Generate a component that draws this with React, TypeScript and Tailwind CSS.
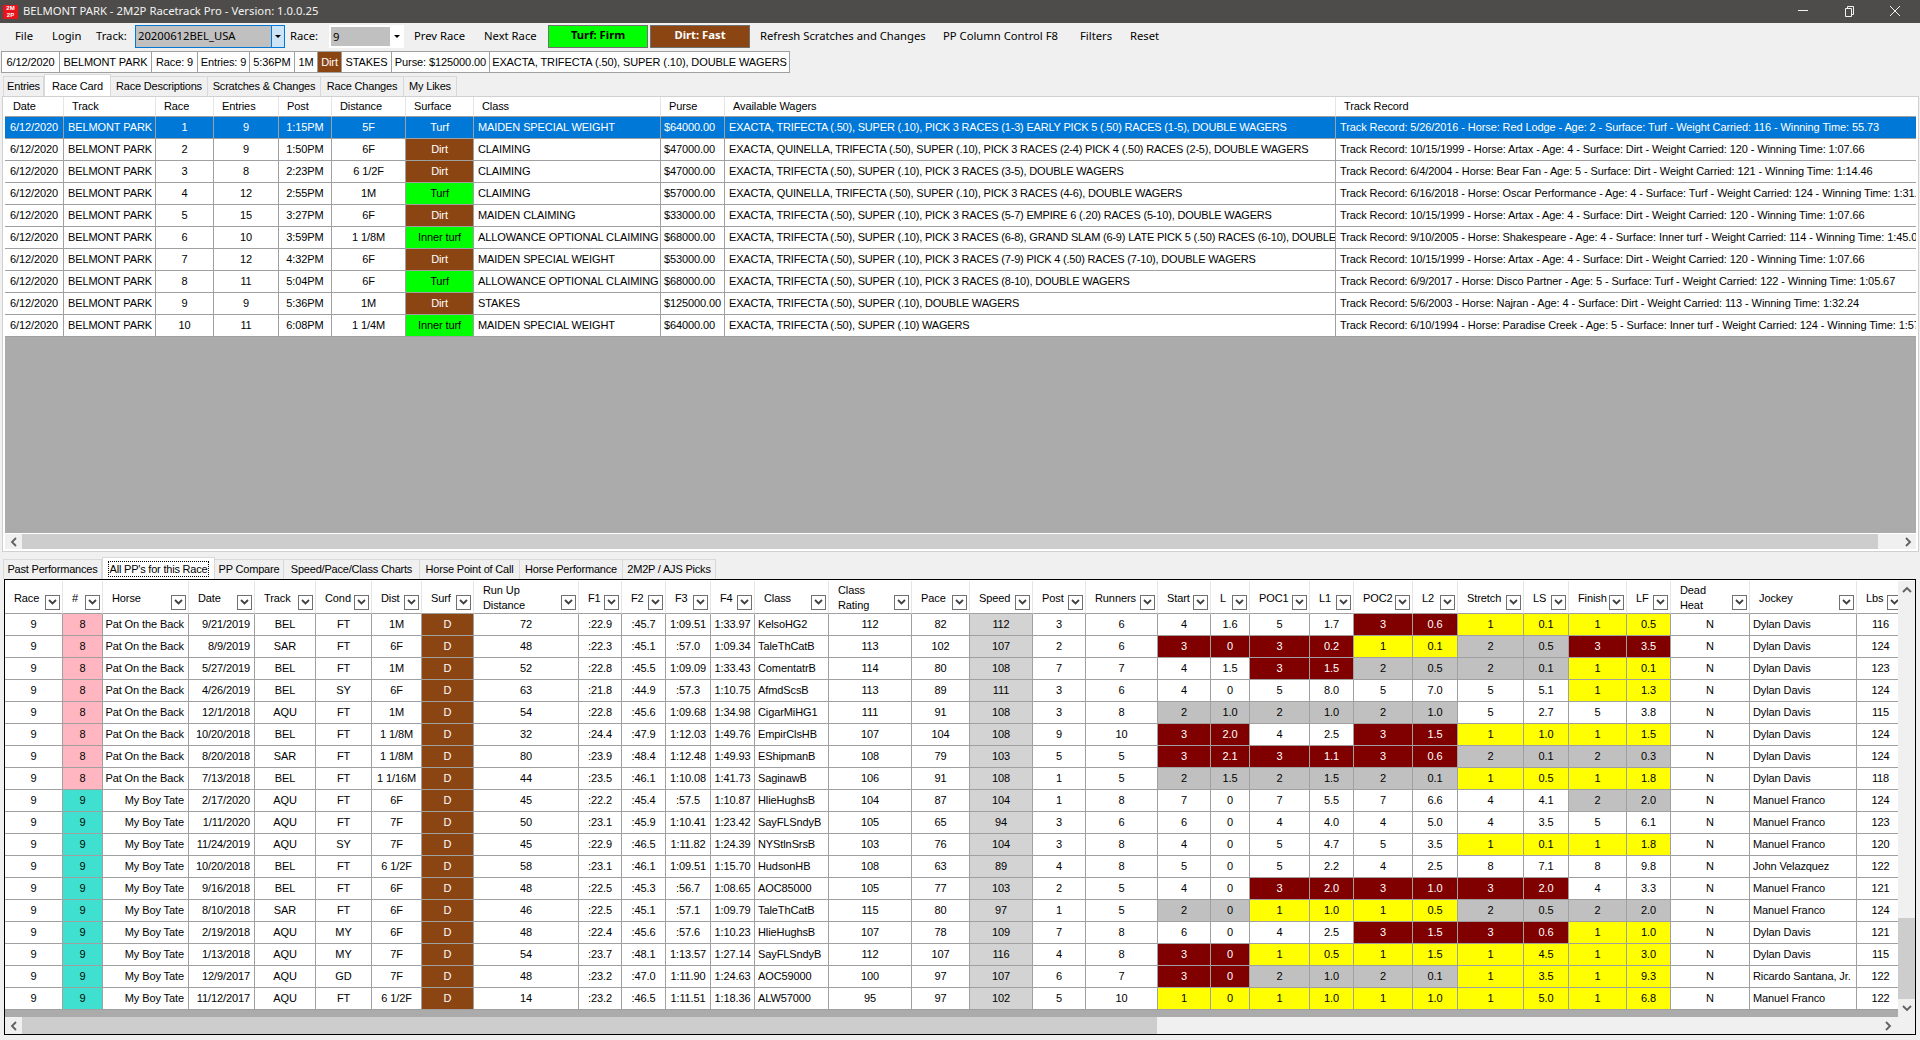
import { useMemo } from 'react'

const BROWN = 'bg-[#8b4513] text-white'
const LIME = 'bg-[#00ff00] text-black'

const raceRows = [
  ['1', '9', '1:15PM', '5F', 'Turf', 'MAIDEN SPECIAL WEIGHT', '$64000.00', 'EXACTA, TRIFECTA (.50), SUPER (.10), PICK 3 RACES (1-3) EARLY PICK 5 (.50) RACES (1-5), DOUBLE WAGERS', 'Track Record: 5/26/2016 - Horse: Red Lodge - Age: 2 - Surface: Turf - Weight Carried: 116 - Winning Time: 55.73'],
  ['2', '9', '1:50PM', '6F', 'Dirt', 'CLAIMING', '$47000.00', 'EXACTA, QUINELLA, TRIFECTA (.50), SUPER (.10), PICK 3 RACES (2-4) PICK 4 (.50) RACES (2-5), DOUBLE WAGERS', 'Track Record: 10/15/1999 - Horse: Artax - Age: 4 - Surface: Dirt - Weight Carried: 120 - Winning Time: 1:07.66'],
  ['3', '8', '2:23PM', '6 1/2F', 'Dirt', 'CLAIMING', '$47000.00', 'EXACTA, TRIFECTA (.50), SUPER (.10), PICK 3 RACES (3-5), DOUBLE WAGERS', 'Track Record: 6/4/2004 - Horse: Bear Fan - Age: 5 - Surface: Dirt - Weight Carried: 121 - Winning Time: 1:14.46'],
  ['4', '12', '2:55PM', '1M', 'Turf', 'CLAIMING', '$57000.00', 'EXACTA, QUINELLA, TRIFECTA (.50), SUPER (.10), PICK 3 RACES (4-6), DOUBLE WAGERS', 'Track Record: 6/16/2018 - Horse: Oscar Performance - Age: 4 - Surface: Turf - Weight Carried: 124 - Winning Time: 1:31.23'],
  ['5', '15', '3:27PM', '6F', 'Dirt', 'MAIDEN CLAIMING', '$33000.00', 'EXACTA, TRIFECTA (.50), SUPER (.10), PICK 3 RACES (5-7) EMPIRE 6 (.20) RACES (5-10), DOUBLE WAGERS', 'Track Record: 10/15/1999 - Horse: Artax - Age: 4 - Surface: Dirt - Weight Carried: 120 - Winning Time: 1:07.66'],
  ['6', '10', '3:59PM', '1 1/8M', 'Inner turf', 'ALLOWANCE OPTIONAL CLAIMING', '$68000.00', 'EXACTA, TRIFECTA (.50), SUPER (.10), PICK 3 RACES (6-8), GRAND SLAM (6-9) LATE PICK 5 (.50) RACES (6-10), DOUBLE WAGERS', 'Track Record: 9/10/2005 - Horse: Shakespeare - Age: 4 - Surface: Inner turf - Weight Carried: 114 - Winning Time: 1:45.00'],
  ['7', '12', '4:32PM', '6F', 'Dirt', 'MAIDEN SPECIAL WEIGHT', '$53000.00', 'EXACTA, TRIFECTA (.50), SUPER (.10), PICK 3 RACES (7-9) PICK 4 (.50) RACES (7-10), DOUBLE WAGERS', 'Track Record: 10/15/1999 - Horse: Artax - Age: 4 - Surface: Dirt - Weight Carried: 120 - Winning Time: 1:07.66'],
  ['8', '11', '5:04PM', '6F', 'Turf', 'ALLOWANCE OPTIONAL CLAIMING', '$68000.00', 'EXACTA, TRIFECTA (.50), SUPER (.10), PICK 3 RACES (8-10), DOUBLE WAGERS', 'Track Record: 6/9/2017 - Horse: Disco Partner - Age: 5 - Surface: Turf - Weight Carried: 122 - Winning Time: 1:05.67'],
  ['9', '9', '5:36PM', '1M', 'Dirt', 'STAKES', '$125000.00', 'EXACTA, TRIFECTA (.50), SUPER (.10), DOUBLE WAGERS', 'Track Record: 5/6/2003 - Horse: Najran - Age: 4 - Surface: Dirt - Weight Carried: 113 - Winning Time: 1:32.24'],
  ['10', '11', '6:08PM', '1 1/4M', 'Inner turf', 'MAIDEN SPECIAL WEIGHT', '$64000.00', 'EXACTA, TRIFECTA (.50), SUPER (.10) WAGERS', 'Track Record: 6/10/1994 - Horse: Paradise Creek - Age: 5 - Surface: Inner turf - Weight Carried: 124 - Winning Time: 1:57.00'],
]

const raceCols = [
  { label: 'Date', col: 'w-[59px]' },
  { label: 'Track', col: 'w-[92px]' },
  { label: 'Race', col: 'w-[58px]' },
  { label: 'Entries', col: 'w-[65px]' },
  { label: 'Post', col: 'w-[53px]' },
  { label: 'Distance', col: 'w-[74px]' },
  { label: 'Surface', col: 'w-[68px]' },
  { label: 'Class', col: 'w-[187px]' },
  { label: 'Purse', col: 'w-[64px]' },
  { label: 'Available Wagers', col: 'w-[611px]' },
  { label: 'Track Record', col: 'w-[581px]' },
]

const ppCols = [
  { label: ['Race'], col: 'w-[58px]' },
  { label: ['#'], col: 'w-[40px]' },
  { label: ['Horse'], col: 'w-[86px]' },
  { label: ['Date'], col: 'w-[66px]' },
  { label: ['Track'], col: 'w-[61px]' },
  { label: ['Cond'], col: 'w-[56px]' },
  { label: ['Dist'], col: 'w-[50px]' },
  { label: ['Surf'], col: 'w-[52px]' },
  { label: ['Run Up', 'Distance'], col: 'w-[105px]' },
  { label: ['F1'], col: 'w-[43px]' },
  { label: ['F2'], col: 'w-[44px]' },
  { label: ['F3'], col: 'w-[45px]' },
  { label: ['F4'], col: 'w-[44px]' },
  { label: ['Class'], col: 'w-[74px]' },
  { label: ['Class', 'Rating'], col: 'w-[83px]' },
  { label: ['Pace'], col: 'w-[58px]' },
  { label: ['Speed'], col: 'w-[63px]' },
  { label: ['Post'], col: 'w-[53px]' },
  { label: ['Runners'], col: 'w-[72px]' },
  { label: ['Start'], col: 'w-[53px]' },
  { label: ['L'], col: 'w-[39px]' },
  { label: ['POC1'], col: 'w-[60px]' },
  { label: ['L1'], col: 'w-[44px]' },
  { label: ['POC2'], col: 'w-[59px]' },
  { label: ['L2'], col: 'w-[45px]' },
  { label: ['Stretch'], col: 'w-[66px]' },
  { label: ['LS'], col: 'w-[45px]' },
  { label: ['Finish'], col: 'w-[58px]' },
  { label: ['LF'], col: 'w-[44px]' },
  { label: ['Dead', 'Heat'], col: 'w-[79px]' },
  { label: ['Jockey'], col: 'w-[107px]' },
  { label: ['Lbs'], col: 'w-[48px]' },
]

// # | horse | date | track | cond | dist | runup | f1 | f2 | f3 | f4 | class | rating | pace | speed | post | runners | calls... | jockey | lbs
const ppData = [
  '8|Pat On the Back|9/21/2019|BEL|FT|1M|72|:22.9|:45.7|1:09.51|1:33.97|KelsoHG2|112|82|112|3|6|4|1.6|5|1.7|3|0.6|1|0.1|1|0.5|Dylan Davis|116',
  '8|Pat On the Back|8/9/2019|SAR|FT|6F|48|:22.3|:45.1|:57.0|1:09.34|TaleThCatB|113|102|107|2|6|3|0|3|0.2|1|0.1|2|0.5|3|3.5|Dylan Davis|124',
  '8|Pat On the Back|5/27/2019|BEL|FT|1M|52|:22.8|:45.5|1:09.09|1:33.43|ComentatrB|114|80|108|7|7|4|1.5|3|1.5|2|0.5|2|0.1|1|0.1|Dylan Davis|123',
  '8|Pat On the Back|4/26/2019|BEL|SY|6F|63|:21.8|:44.9|:57.3|1:10.75|AfmdScsB|113|89|111|3|6|4|0|5|8.0|5|7.0|5|5.1|1|1.3|Dylan Davis|124',
  '8|Pat On the Back|12/1/2018|AQU|FT|1M|54|:22.8|:45.6|1:09.68|1:34.98|CigarMiHG1|111|91|108|3|8|2|1.0|2|1.0|2|1.0|5|2.7|5|3.8|Dylan Davis|115',
  '8|Pat On the Back|10/20/2018|BEL|FT|1 1/8M|32|:24.4|:47.9|1:12.03|1:49.76|EmpirClsHB|107|104|108|9|10|3|2.0|4|2.5|3|1.5|1|1.0|1|1.5|Dylan Davis|124',
  '8|Pat On the Back|8/20/2018|SAR|FT|1 1/8M|80|:23.9|:48.4|1:12.48|1:49.93|EShipmanB|108|79|103|5|5|3|2.1|3|1.1|3|0.6|2|0.1|2|0.3|Dylan Davis|124',
  '8|Pat On the Back|7/13/2018|BEL|FT|1 1/16M|44|:23.5|:46.1|1:10.08|1:41.73|SaginawB|106|91|108|1|5|2|1.5|2|1.5|2|0.1|1|0.5|1|1.8|Dylan Davis|118',
  '9|My Boy Tate|2/17/2020|AQU|FT|6F|45|:22.2|:45.4|:57.5|1:10.87|HlieHughsB|104|87|104|1|8|7|0|7|5.5|7|6.6|4|4.1|2|2.0|Manuel Franco|124',
  '9|My Boy Tate|1/11/2020|AQU|FT|7F|50|:23.1|:45.9|1:10.41|1:23.42|SayFLSndyB|105|65|94|3|6|6|0|4|4.0|4|5.0|4|3.5|5|6.1|Manuel Franco|123',
  '9|My Boy Tate|11/24/2019|AQU|SY|7F|45|:22.9|:46.5|1:11.82|1:24.39|NYStlnSrsB|103|76|104|3|8|4|0|5|4.7|5|3.5|1|0.1|1|1.8|Manuel Franco|120',
  '9|My Boy Tate|10/20/2018|BEL|FT|6 1/2F|58|:23.1|:46.1|1:09.51|1:15.70|HudsonHB|108|63|89|4|8|5|0|5|2.2|4|2.5|8|7.1|8|9.8|John Velazquez|122',
  '9|My Boy Tate|9/16/2018|BEL|FT|6F|48|:22.5|:45.3|:56.7|1:08.65|AOC85000|105|77|103|2|5|4|0|3|2.0|3|1.0|3|2.0|4|3.3|Manuel Franco|121',
  '9|My Boy Tate|8/10/2018|SAR|FT|6F|46|:22.5|:45.1|:57.1|1:09.79|TaleThCatB|115|80|97|1|5|2|0|1|1.0|1|0.5|2|0.5|2|2.0|Manuel Franco|124',
  '9|My Boy Tate|2/19/2018|AQU|MY|6F|48|:22.4|:45.6|:57.6|1:10.23|HlieHughsB|107|78|109|7|8|6|0|4|2.5|3|1.5|3|0.6|1|1.0|Dylan Davis|121',
  '9|My Boy Tate|1/13/2018|AQU|MY|7F|54|:23.7|:48.1|1:13.57|1:27.14|SayFLSndyB|112|107|116|4|8|3|0|1|0.5|1|1.5|1|4.5|1|3.0|Dylan Davis|115',
  '9|My Boy Tate|12/9/2017|AQU|GD|7F|48|:23.2|:47.0|1:11.90|1:24.63|AOC59000|100|97|107|6|7|3|0|2|1.0|2|0.1|1|3.5|1|9.3|Ricardo Santana, Jr.|122',
  '9|My Boy Tate|11/12/2017|AQU|FT|6 1/2F|14|:23.2|:46.5|1:11.51|1:18.36|ALW57000|95|97|102|5|10|1|0|1|1.0|1|1.0|1|5.0|1|6.8|Manuel Franco|122',
]

const summary = [
  { text: '6/12/2020', w: 'w-[59px]', c: '' },
  { text: 'BELMONT PARK', w: 'w-[92px]', c: '' },
  { text: 'Race: 9', w: 'w-[46px]', c: '' },
  { text: 'Entries: 9', w: 'w-[52px]', c: '' },
  { text: '5:36PM', w: 'w-[45px]', c: '' },
  { text: '1M', w: 'w-[23px]', c: '' },
  { text: 'Dirt', w: 'w-[24px]', c: BROWN },
  { text: 'STAKES', w: 'w-[50px]', c: '' },
  { text: 'Purse: $125000.00', w: 'w-[98px]', c: '' },
  { text: 'EXACTA, TRIFECTA (.50), SUPER (.10), DOUBLE WAGERS', w: 'w-[300px]', c: '' },
]

const topTabs = [
  { text: 'Entries', w: 'w-[41px]' },
  { text: 'Race Card', w: 'w-[67px]', active: true },
  { text: 'Race Descriptions', w: 'w-[97px]' },
  { text: 'Scratches & Changes', w: 'w-[113px]' },
  { text: 'Race Changes', w: 'w-[83px]' },
  { text: 'My Likes', w: 'w-[53px]' },
]

const bottomTabs = [
  { text: 'Past Performances', w: 'w-[99px]' },
  { text: "All PP's for this Race", w: 'w-[113px]', active: true, focus: true },
  { text: 'PP Compare', w: 'w-[69px]' },
  { text: 'Speed/Pace/Class Charts', w: 'w-[136px]' },
  { text: 'Horse Point of Call', w: 'w-[100px]' },
  { text: 'Horse Performance', w: 'w-[103px]' },
  { text: '2M2P / AJS Picks', w: 'w-[93px]' },
]

function posColor(v: string) {
  if (v === '1') return 'bg-[#ffff00]'
  if (v === '2') return 'bg-[#c0c0c0]'
  if (v === '3') return 'bg-[#800000] text-white'
  return 'bg-white'
}

function surfaceColor(s: string, selected: boolean) {
  if (selected) return ''
  return s === 'Dirt' ? BROWN : LIME
}

function Chevron({ dir, className }: { dir: 'up' | 'down' | 'left' | 'right'; className?: string }) {
  const d = {
    up: 'M1 7 L5 3 L9 7',
    down: 'M1 3 L5 7 L9 3',
    left: 'M7 1 L3 5 L7 9',
    right: 'M3 1 L7 5 L3 9',
  }[dir]
  return (
    <svg viewBox="0 0 10 10" className={className ?? 'w-[10px] h-[10px]'} fill="none" stroke="#606060" strokeWidth="1.8">
      <path d={d} />
    </svg>
  )
}

function FilterButton() {
  return (
    <span className="flex-none w-[15px] h-[15px] mt-[10px] border border-[#707070] bg-white flex items-center justify-center">
      <svg viewBox="0 0 9 6" className="w-[9px] h-[6px]" fill="none" stroke="#404040" strokeWidth="1.8">
        <path d="M1 1 L4.5 4.5 L8 1" />
      </svg>
    </span>
  )
}

function Tabs({ tabs }: { tabs: { text: string; w: string; active?: boolean; focus?: boolean }[] }) {
  return (
    <div className="flex items-end h-[22px] pl-[3px] tracking-[-0.2px]">
      {tabs.map((t) =>
        t.active ? (
          <div key={t.text} className={`${t.w} h-[22px] bg-white border border-b-0 border-[#d9d9d9] flex items-center justify-center whitespace-nowrap`}>
            <span className={t.focus ? 'border border-dotted border-black px-[1px] leading-[14px]' : 'leading-[14px]'}>{t.text}</span>
          </div>
        ) : (
          <div key={t.text} className={`${t.w} h-[20px] bg-[#f0f0f0] border border-l-0 border-b-0 border-[#d9d9d9] first:border-l flex items-center justify-center whitespace-nowrap`}>
            {t.text}
          </div>
        ),
      )}
    </div>
  )
}

function RaceCardGrid() {
  return (
    <table className="table-fixed border-separate border-spacing-0 w-[1912px] bg-white">
      <colgroup>
        {raceCols.map((c) => (
          <col key={c.label} className={c.col} />
        ))}
      </colgroup>
      <thead>
        <tr className="h-[20px]">
          {raceCols.map((c) => (
            <th key={c.label} className="font-normal text-left pl-[8px] border-b border-r border-b-[#a0a0a0] border-r-[#e5e5e5] overflow-hidden whitespace-nowrap">
              {c.label}
            </th>
          ))}
        </tr>
      </thead>
      <tbody>
        {raceRows.map((r, i) => {
          const selected = i === 0
          const base = `h-[22px] p-0 border-b border-r border-[#a0a0a0] overflow-hidden whitespace-nowrap ${selected ? 'bg-[#0078d7] text-white' : ''}`
          return (
            <tr key={r[0]}>
              <td className={`${base} text-center`}>6/12/2020</td>
              <td className={`${base} pl-[4px]`}>BELMONT PARK</td>
              <td className={`${base} text-center`}>{r[0]}</td>
              <td className={`${base} text-center`}>{r[1]}</td>
              <td className={`${base} text-center`}>{r[2]}</td>
              <td className={`${base} text-center`}>{r[3]}</td>
              <td className={`${base} text-center ${surfaceColor(r[4], selected)}`}>{r[4]}</td>
              <td className={`${base} pl-[4px]`}>{r[5]}</td>
              <td className={`${base} pl-[3px]`}>{r[6]}</td>
              <td className={`${base} pl-[4px] tracking-[-0.19px]`}>{r[7]}</td>
              <td className={`${base} pl-[4px]`}>{r[8]}</td>
            </tr>
          )
        })}
      </tbody>
    </table>
  )
}

function PPGrid() {
  const rows = useMemo(() => ppData.map((s) => s.split('|')), [])
  const cell = 'h-[22px] p-0 border-b border-r border-[#a0a0a0] overflow-hidden whitespace-nowrap'
  return (
    <table className="table-fixed border-separate border-spacing-0 w-[1900px] bg-white">
      <colgroup>
        {ppCols.map((c) => (
          <col key={c.label.join(' ')} className={c.col} />
        ))}
      </colgroup>
      <thead>
        <tr className="h-[33px]">
          {ppCols.map((c) => (
            <th key={c.label.join(' ')} className="p-0 font-normal text-left border-b border-r border-b-[#a0a0a0] border-r-[#e5e5e5] overflow-hidden">
              <div className="flex items-center justify-between pl-[9px] pr-[2px] leading-[15px]">
                <span className="whitespace-nowrap pt-[2px]">
                  {c.label.map((l) => (
                    <span key={l} className="block">{l}</span>
                  ))}
                </span>
                <FilterButton />
              </div>
            </th>
          ))}
        </tr>
      </thead>
      <tbody>
        {rows.map((r, i) => {
          const calls = r.slice(17, 27)
          return (
            <tr key={i}>
              <td className={`${cell} text-center`}>9</td>
              <td className={`${cell} text-center ${r[0] === '8' ? 'bg-[#ffb6c1]' : 'bg-[#40e0d0]'}`}>{r[0]}</td>
              <td className={`${cell} text-right pr-[4px]`}>{r[1]}</td>
              <td className={`${cell} text-right pr-[4px]`}>{r[2]}</td>
              <td className={`${cell} text-center`}>{r[3]}</td>
              <td className={`${cell} text-center`}>{r[4]}</td>
              <td className={`${cell} text-center`}>{r[5]}</td>
              <td className={`${cell} text-center ${BROWN}`}>D</td>
              <td className={`${cell} text-center`}>{r[6]}</td>
              <td className={`${cell} text-center`}>{r[7]}</td>
              <td className={`${cell} text-center`}>{r[8]}</td>
              <td className={`${cell} text-center`}>{r[9]}</td>
              <td className={`${cell} text-center`}>{r[10]}</td>
              <td className={`${cell} pl-[3px]`}>{r[11]}</td>
              <td className={`${cell} text-center`}>{r[12]}</td>
              <td className={`${cell} text-center`}>{r[13]}</td>
              <td className={`${cell} text-center bg-[#d3d3d3]`}>{r[14]}</td>
              <td className={`${cell} text-center`}>{r[15]}</td>
              <td className={`${cell} text-center`}>{r[16]}</td>
              {calls.map((v, k) => (
                <td key={k} className={`${cell} text-center ${posColor(k % 2 === 0 ? v : calls[k - 1])}`}>{v}</td>
              ))}
              <td className={`${cell} text-center`}>N</td>
              <td className={`${cell} pl-[3px]`}>{r[27]}</td>
              <td className={`${cell} text-center`}>{r[28]}</td>
            </tr>
          )
        })}
      </tbody>
    </table>
  )
}

export default function App() {
  return (
    <div className="w-[1920px] h-[1040px] overflow-hidden flex flex-col bg-[#f0f0f0] text-black text-[11px] tracking-[-0.1px] font-['Liberation_Sans',Arial,sans-serif]">
      {/* title bar */}
      <div className="h-[23px] flex-none bg-[#4d4c4a] text-[#f2f2f2] flex items-center text-[11.3px] tracking-normal font-['Noto_Sans',sans-serif]">
        <div className="ml-[3px] w-[15px] h-[14px] bg-[#e8141c] text-white text-[6px] leading-[7px] font-bold text-center font-['Liberation_Sans',sans-serif]">
          <div>2M</div>
          <div>2P</div>
        </div>
        <span className="ml-[5px]">BELMONT PARK - 2M2P Racetrack Pro - Version: 1.0.0.25</span>
        <div className="ml-auto mr-[2px] flex items-center">
          <svg viewBox="0 0 46 23" className="w-[46px] h-[23px]" stroke="#f2f2f2" fill="none"><path d="M18 10.5 H28" /></svg>
          <svg viewBox="0 0 46 23" className="w-[46px] h-[23px]" stroke="#f2f2f2" fill="none"><path d="M19.5 8.5 h6 v8 h-6 z M21.5 8.5 v-2 h6 v8 h-2" /></svg>
          <svg viewBox="0 0 46 23" className="w-[46px] h-[23px]" stroke="#f2f2f2" fill="none"><path d="M18 6 L28 16 M28 6 L18 16" /></svg>
        </div>
      </div>

      {/* toolbar */}
      <div className="h-[27px] flex-none flex items-center pl-[15px] text-[11.25px] tracking-normal whitespace-nowrap font-['Noto_Sans',sans-serif]">
        <span className="w-[37px]">File</span>
        <span className="w-[44px]">Login</span>
        <span className="w-[39px]">Track:</span>
        <div className="w-[150px] h-[23px] border border-[#0078d7] bg-[#c0c0c0] flex items-center">
          <span className="pl-[2px] flex-1">20200612BEL_USA</span>
          <span className="w-[13px] h-full bg-[#cce4f7] border-l border-[#0078d7] flex items-center justify-center">
            <span className="border-x-[3px] border-t-[3px] border-x-transparent border-t-black" />
          </span>
        </div>
        <span className="w-[39px] ml-[5px]">Race:</span>
        <div className="w-[75px] h-[23px] bg-white flex items-center pl-[2px]">
          <span className="w-[59px] h-[19px] bg-[#c0c0c0] pl-[2px] leading-[19px]">9</span>
          <span className="ml-[4px] border-x-[3px] border-t-[3px] border-x-transparent border-t-black" />
        </div>
        <span className="w-[70px] ml-[10px]">Prev Race</span>
        <span className="w-[64px]">Next Race</span>
        <div className={`w-[100px] h-[23px] pb-[2px] border border-[#707070] font-bold flex items-center justify-center ${LIME}`}>Turf: Firm</div>
        <div className={`w-[100px] h-[23px] pb-[2px] ml-[2px] border border-[#707070] font-bold flex items-center justify-center ${BROWN}`}>Dirt: Fast</div>
        <span className="w-[183px] ml-[10px]">Refresh Scratches and Changes</span>
        <span className="w-[137px]">PP Column Control F8</span>
        <span className="w-[50px]">Filters</span>
        <span>Reset</span>
      </div>

      {/* race summary */}
      <div className="h-[22px] flex-none flex ml-[1px] mt-[1px]">
        {summary.map((s) => (
          <div key={s.text} className={`${s.w} h-full border border-l-0 first:border-l border-[#a0a0a0] flex items-center justify-center whitespace-nowrap ${s.c || 'bg-white'}`}>
            {s.text}
          </div>
        ))}
      </div>

      {/* race card */}
      <div className="flex-none mt-[1px]">
        <Tabs tabs={topTabs} />
      </div>
      <div className="h-[456px] flex-none ml-[2px] mr-[1px] border border-[#d0d0d0] bg-white px-[2px] pb-[2px] flex flex-col">
        <div className="overflow-hidden flex-1 flex flex-col bg-[#ababab]">
          <RaceCardGrid />
        </div>
        <div className="h-[16px] flex-none flex items-center border-t border-white bg-[#f0f0f0]">
          <div className="w-[17px] flex justify-center"><Chevron dir="left" /></div>
          <div className="h-full w-[1856px] bg-[#cdcdcd]" />
          <div className="ml-auto w-[17px] flex justify-center"><Chevron dir="right" /></div>
        </div>
      </div>

      {/* past performances */}
      <div className="flex-none mt-[5px]">
        <Tabs tabs={bottomTabs} />
      </div>
      <div className="h-[456px] flex-none mx-[4px] border border-black flex flex-col bg-white pt-[1px]">
        <div className="flex-1 flex min-h-0">
          <div className="w-[1893px] flex flex-col overflow-hidden bg-[#ababab]">
            <PPGrid />
          </div>
          <div className="w-[17px] flex-none bg-[#f0f0f0] flex flex-col items-center">
            <div className="h-[17px] flex items-center"><Chevron dir="up" /></div>
            <div className="mt-[320px] h-[81px] w-full bg-[#cdcdcd]" />
            <div className="h-[17px] flex items-center"><Chevron dir="down" /></div>
          </div>
        </div>
        <div className="h-[17px] flex-none flex items-center bg-[#f0f0f0]">
          <div className="w-[17px] flex justify-center"><Chevron dir="left" /></div>
          <div className="h-full w-[1135px] bg-[#cdcdcd]" />
          <div className="ml-auto mr-[19px] w-[17px] flex justify-center"><Chevron dir="right" /></div>
        </div>
      </div>
    </div>
  )
}
